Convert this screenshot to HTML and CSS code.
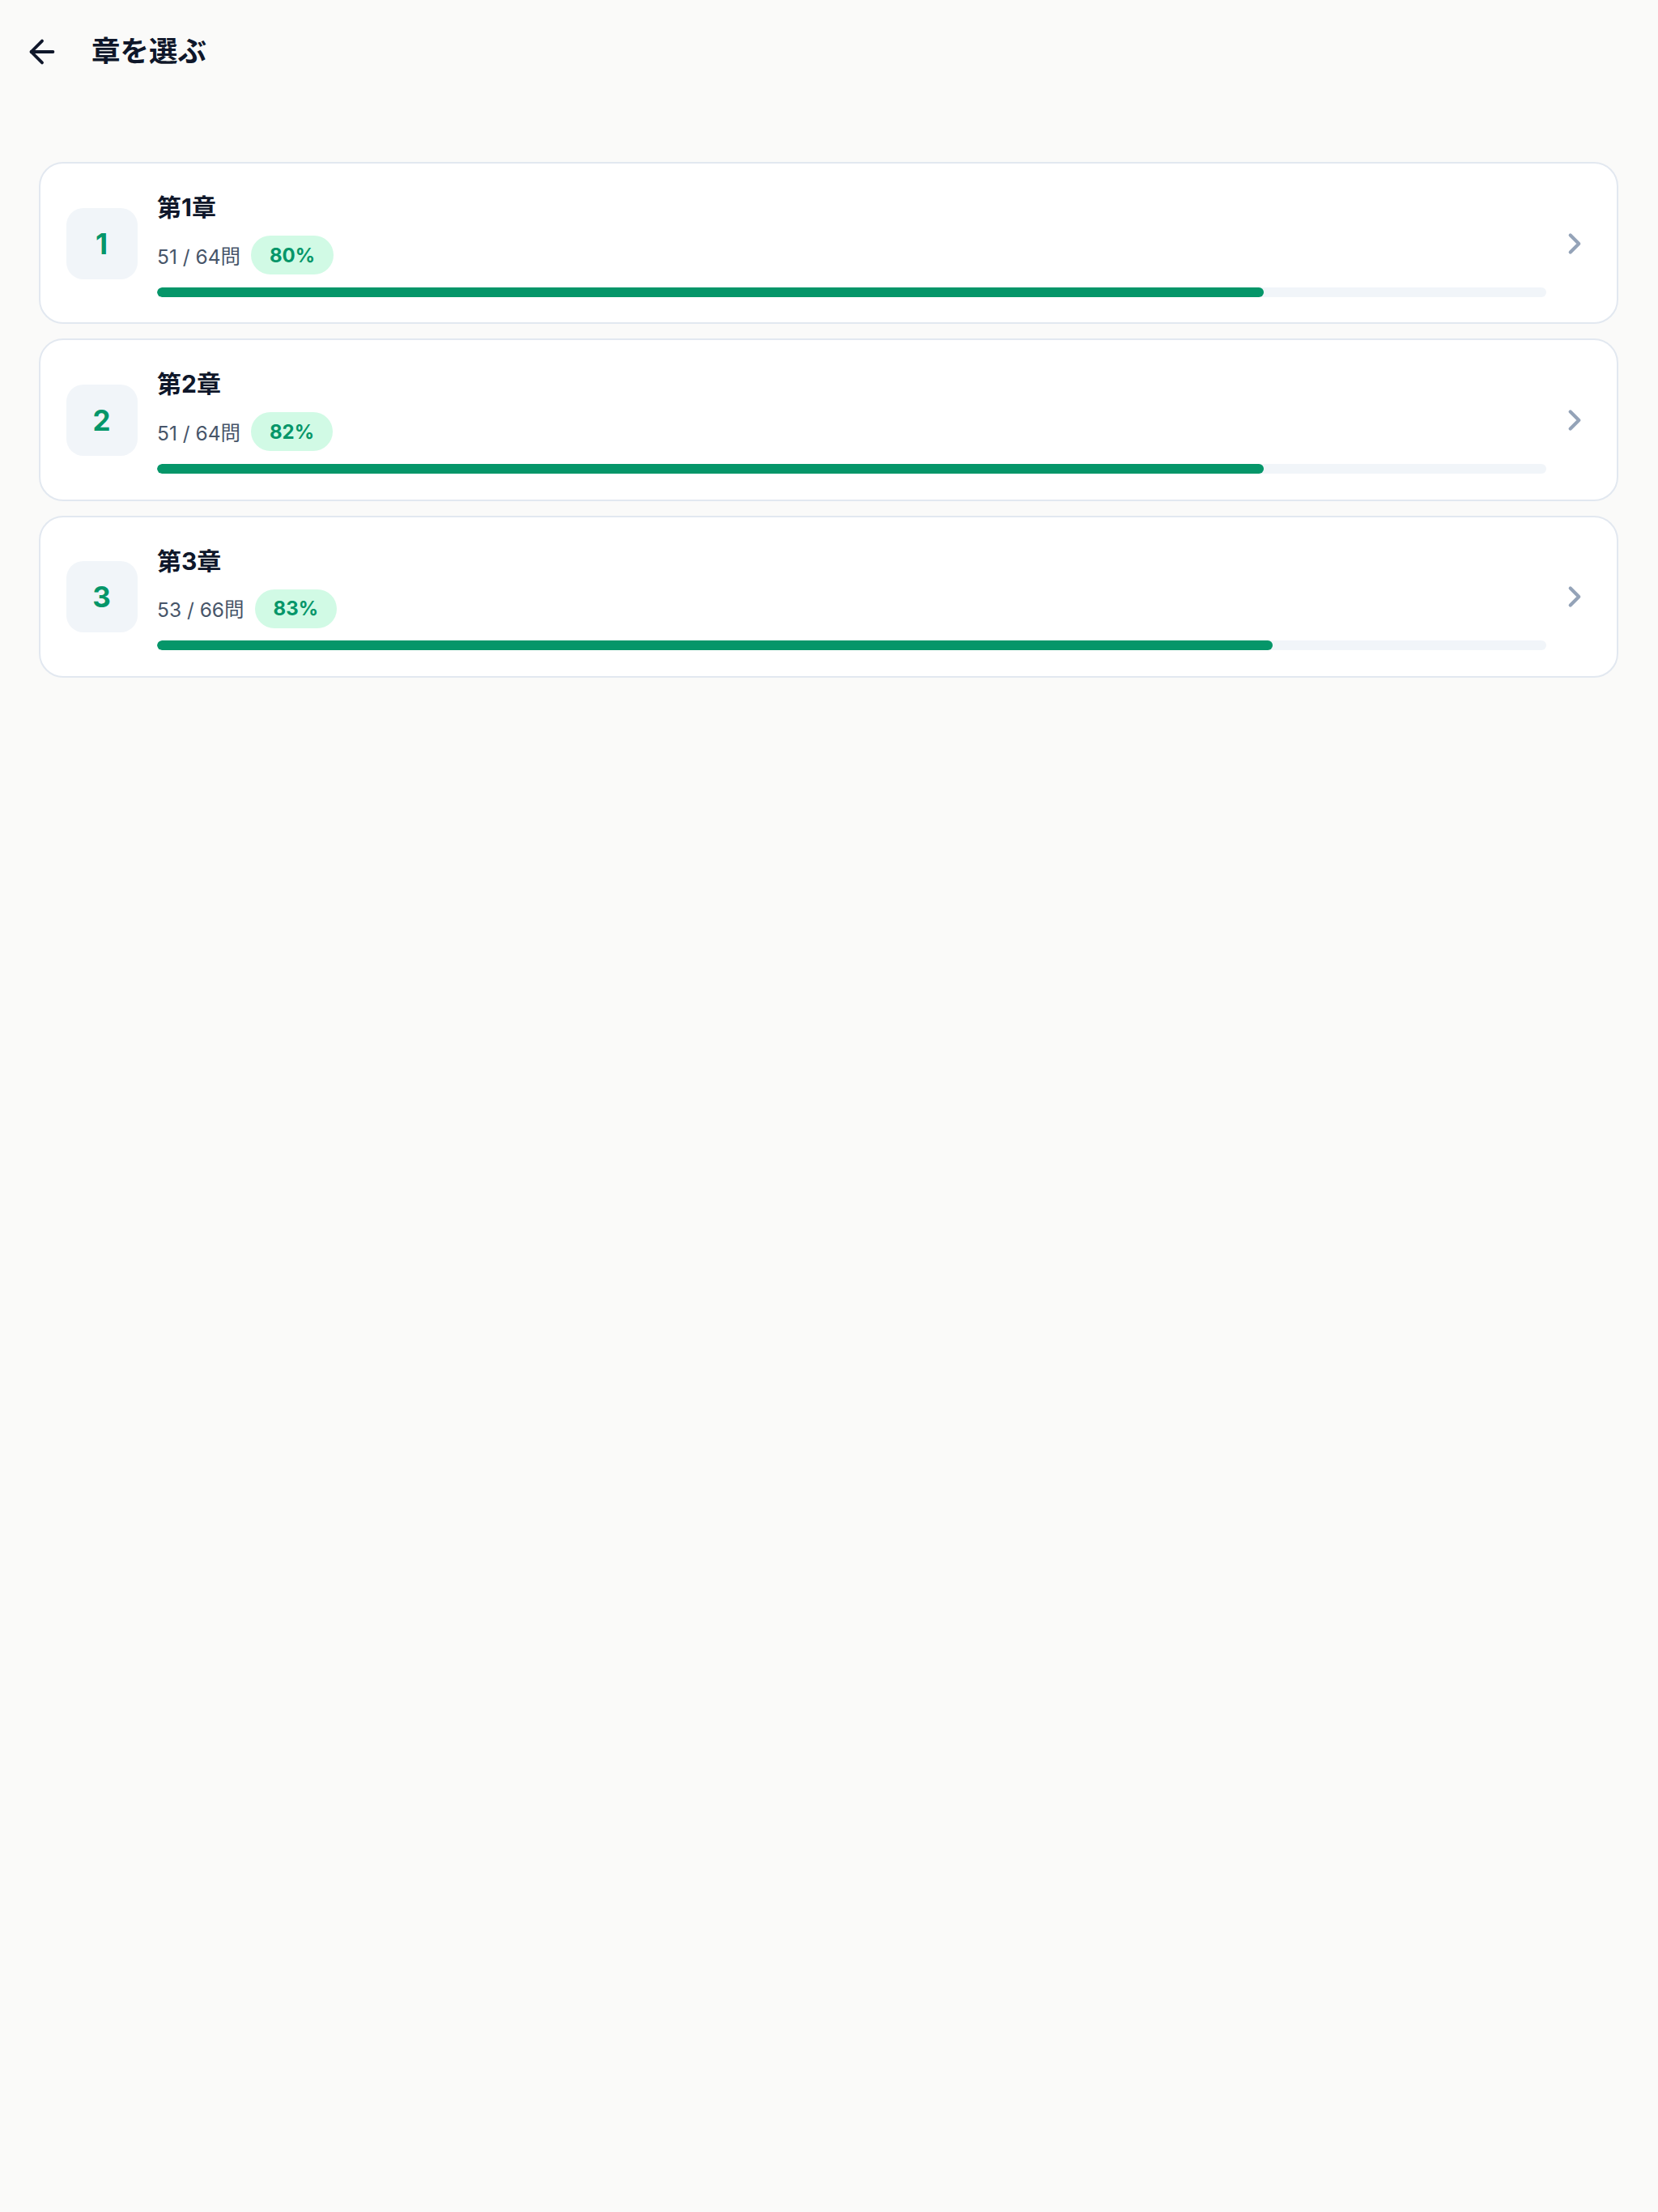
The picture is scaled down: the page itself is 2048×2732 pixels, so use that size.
FILE: index.html
```html
<!DOCTYPE html>
<html lang="ja">
<head>
<meta charset="utf-8">
<title>章を選ぶ</title>
<link rel="stylesheet" href="styles.css">
</head>
<body>
<header class="topbar">
  <button class="back" aria-label="戻る">
    <svg viewBox="0 0 24 24" fill="none" stroke="currentColor" stroke-width="2" stroke-linecap="round" stroke-linejoin="round"><path d="m12 19-7-7 7-7"/><path d="M19 12H5"/></svg>
  </button>
  <h1 class="title">章を選ぶ</h1>
</header>
<main class="list">
  <a class="card" href="#">
    <div class="num">1</div>
    <div class="info">
      <div class="name">第1章</div>
      <div class="meta"><span class="count">51 / 64問</span><span class="badge">80%</span></div>
      <div class="track"><div class="fill" style="width:79.69%"></div></div>
    </div>
    <svg class="chev" viewBox="0 0 24 24" fill="none" stroke="currentColor" stroke-width="2.4" stroke-linecap="round" stroke-linejoin="round"><path d="m9 18 6-6-6-6"/></svg>
  </a>
  <a class="card" href="#">
    <div class="num">2</div>
    <div class="info">
      <div class="name">第2章</div>
      <div class="meta"><span class="count">51 / 64問</span><span class="badge">82%</span></div>
      <div class="track"><div class="fill" style="width:79.69%"></div></div>
    </div>
    <svg class="chev" viewBox="0 0 24 24" fill="none" stroke="currentColor" stroke-width="2.4" stroke-linecap="round" stroke-linejoin="round"><path d="m9 18 6-6-6-6"/></svg>
  </a>
  <a class="card" href="#">
    <div class="num">3</div>
    <div class="info">
      <div class="name">第3章</div>
      <div class="meta"><span class="count">53 / 66問</span><span class="badge">83%</span></div>
      <div class="track"><div class="fill" style="width:80.3%"></div></div>
    </div>
    <svg class="chev" viewBox="0 0 24 24" fill="none" stroke="currentColor" stroke-width="2.4" stroke-linecap="round" stroke-linejoin="round"><path d="m9 18 6-6-6-6"/></svg>
  </a>
</main>
</body>
</html>
```
FILE: styles.css
```css
* { box-sizing: border-box; }
html, body {
  margin: 0;
  padding: 0;
  background: #fafaf9;
  font-family: "Inter", "Noto Sans CJK JP", sans-serif;
  color: #0f172a;
}
.topbar {
  height: 128px;
  display: flex;
  align-items: center;
  padding: 0 0 0 29px;
}
.back {
  width: 46px;
  height: 46px;
  padding: 0;
  margin: 0;
  border: none;
  background: none;
  color: #0f172a;
  display: flex;
  cursor: pointer;
}
.back svg { width: 46px; height: 46px; }
.title {
  margin: 0 0 0 38px;
  font-size: 35.5px;
  font-weight: 700;
  line-height: 1.4;
  color: #0f172a;
}
.list {
  padding: 72px 49px 0 48px;
  display: flex;
  flex-direction: column;
  gap: 18px;
}
.card {
  display: flex;
  align-items: center;
  gap: 24.5px;
  background: #ffffff;
  border: 2px solid #e2e8f0;
  border-radius: 30px;
  padding: 33px 31.5px 31.5px 31.5px;
  text-decoration: none;
  color: inherit;
}
.num {
  flex: none;
  width: 88px;
  height: 88px;
  border-radius: 21px;
  background: #f1f5f9;
  color: #059669;
  font-size: 35px;
  font-weight: 700;
  display: flex;
  align-items: center;
  justify-content: center;
}
.info {
  flex: 1;
  min-width: 0;
  display: flex;
  flex-direction: column;
}
.name {
  font-size: 30px;
  font-weight: 700;
  line-height: 42px;
  color: #0f172a;
}
.meta {
  margin-top: 14px;
  display: flex;
  align-items: center;
  gap: 13px;
  height: 48px;
}
.count {
  font-size: 24.5px;
  color: #475569;
}
.badge {
  height: 48px;
  padding: 0 23px;
  border-radius: 999px;
  background: #d1fae5;
  color: #059669;
  font-size: 24px;
  font-weight: 700;
  display: flex;
  align-items: center;
}
.track {
  margin-top: 15.75px;
  height: 12px;
  border-radius: 999px;
  background: #f1f5f9;
  overflow: hidden;
}
.fill {
  height: 100%;
  border-radius: 999px;
  background: #059669;
}
.chev {
  flex: none;
  width: 42px;
  height: 42px;
  margin-left: -10.5px;
  color: #94a3b8;
}
```
